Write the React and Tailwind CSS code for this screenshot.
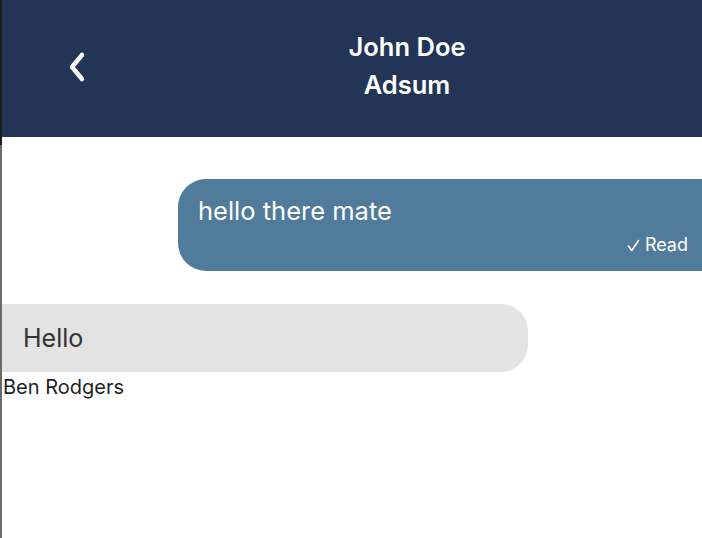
const ChevronLeft = () => (
    <svg className="w-[22px] h-[32px]" viewBox="0 0 22 32" fill="none" stroke="currentColor" strokeWidth="4.5" strokeLinecap="round" strokeLinejoin="round">
        <path d="M16 4L6 16l10 12" />
    </svg>
);

const Check = () => (
    <svg className="w-[13px] h-[13px]" viewBox="0 0 13 13" fill="none" stroke="currentColor" strokeWidth="1.6" strokeLinecap="round" strokeLinejoin="round">
        <path d="M1.5 7l3.2 4.5L11.5 1.5" />
    </svg>
);

export default function App() {
    return (
        <div className="flex w-[702px] h-[538px] bg-white font-['Inter',sans-serif] overflow-hidden">
            {/* Left window edge */}
            <div className="flex flex-col w-[2px] flex-shrink-0">
                <div className="h-[145px] bg-[#1c1c1c]" />
                <div className="flex-1 bg-[#6a6a6a]" />
            </div>

            <div className="flex flex-col flex-1 min-w-0">
                {/* Header */}
                <header className="flex items-center h-[137px] bg-[#233557] text-white">
                    <div className="w-[110px] flex items-center justify-start pl-[64px] mt-[-4px]">
                        <ChevronLeft />
                    </div>
                    <div className="flex-1 flex flex-col items-center font-semibold text-[25.5px] leading-[38px] mt-[-5px]">
                        <span>John Doe</span>
                        <span>Adsum</span>
                    </div>
                </header>

                {/* Messages */}
                <div className="flex flex-col pt-[42px]">
                    <div className="flex justify-end">
                        <div className="w-[524px] h-[92px] bg-[#507b9b] rounded-l-[28px] text-white pl-5 pr-[14px] pt-[16px] flex flex-col">
                            <p className="text-[25.5px] leading-[32px]">hello there mate</p>
                            <p className="self-end flex items-center gap-[5px] text-[18px] leading-[22px] mt-[7px]">
                                <Check />
                                <span>Read</span>
                            </p>
                        </div>
                    </div>

                    <div className="flex flex-col mt-[33px]">
                        <div className="w-[526px] h-[68px] bg-[#e3e3e3] rounded-r-[27px] flex items-center pl-[21px]">
                            <p className="text-[25px] text-[#333] leading-[32px]">Hello</p>
                        </div>
                        <p className="text-[20px] leading-[28px] text-[#1f1f1f] pl-[1px] mt-[1px]">Ben Rodgers</p>
                    </div>
                </div>
            </div>
        </div>
    );
}
